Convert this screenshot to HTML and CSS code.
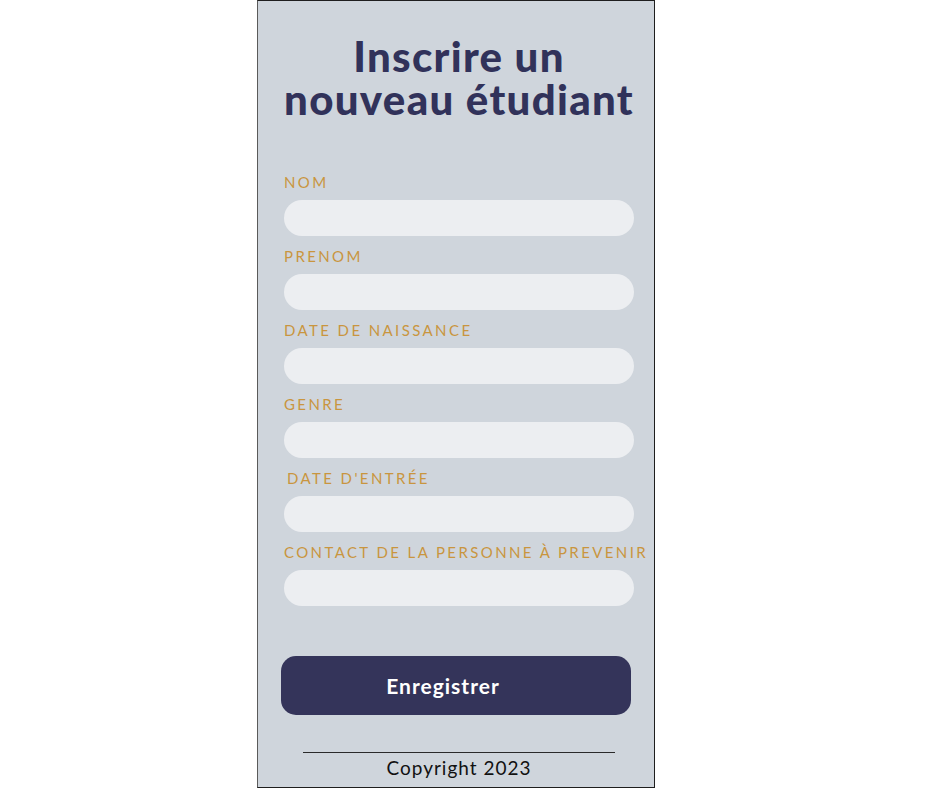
FILE: index.html
```html
<!DOCTYPE html>
<html lang="fr">
<head>
<meta charset="utf-8">
<title>Inscrire un nouveau étudiant</title>
<link rel="stylesheet" href="styles.css">
</head>
<body>
<main class="panel">
  <h1 class="title">Inscrire un<br>nouveau étudiant</h1>
  <form class="form">
    <div class="field">
      <label class="label" for="nom">NOM</label>
      <input class="input" id="nom" type="text">
    </div>
    <div class="field">
      <label class="label" for="prenom">PRENOM</label>
      <input class="input" id="prenom" type="text">
    </div>
    <div class="field">
      <label class="label" for="naissance">DATE DE NAISSANCE</label>
      <input class="input" id="naissance" type="text">
    </div>
    <div class="field">
      <label class="label" for="genre">GENRE</label>
      <input class="input" id="genre" type="text">
    </div>
    <div class="field">
      <label class="label label--indent" for="entree">DATE D'ENTRÉE</label>
      <input class="input" id="entree" type="text">
    </div>
    <div class="field">
      <label class="label" for="contact">CONTACT DE LA PERSONNE À PREVENIR</label>
      <input class="input" id="contact" type="text">
    </div>
    <button class="button" type="button">Enregistrer</button>
  </form>
  <footer class="footer">
    <hr class="rule">
    <p class="copyright">Copyright 2023</p>
  </footer>
</main>
</body>
</html>
```

FILE: styles.css
```css
* { box-sizing: border-box; }

html, body {
  margin: 0;
  padding: 0;
  background: #ffffff;
}

.panel {
  margin-left: 257px;
  width: 398px;
  height: 788px;
  background: #cfd5dc;
  border: 1px solid #1e1e1e;
  border-left-color: #5a5a5a;
  padding: 0 20px 0 26px;
  display: flex;
  flex-direction: column;
  overflow: hidden;
  font-family: Lato, "Noto Sans", sans-serif;
}

.title {
  margin: 34px 0 0;
  font-family: Lato, "Noto Sans", sans-serif;
  font-weight: 900;
  font-size: 42px;
  line-height: 43px;
  color: #31325a;
  text-align: center;
  letter-spacing: 1.3px;
  white-space: nowrap;
}

.form {
  margin-top: 51px;
  display: flex;
  flex-direction: column;
}

.field {
  display: flex;
  flex-direction: column;
  margin-bottom: 10px;
}

.label {
  font-size: 15px;
  line-height: 20px;
  letter-spacing: 2.4px;
  color: #c9953f;
  white-space: nowrap;
  margin-bottom: 8px;
}

.label--indent { padding-left: 3px; }

.input {
  width: 350px;
  height: 36px;
  border: none;
  border-radius: 18px;
  background: #eceef1;
  outline: none;
  padding: 0 16px;
}

.button {
  margin: 40px 0 0 -3px;
  width: 350px;
  height: 59px;
  border: none;
  border-radius: 15px;
  background: #34345a;
  color: #ffffff;
  font-family: Lato, "Noto Sans", sans-serif;
  font-weight: 700;
  font-size: 21px;
  letter-spacing: 1px;
  padding: 0 26px 0 0;
}

.footer {
  margin-top: 37px;
  display: flex;
  flex-direction: column;
  align-items: center;
}

.rule {
  width: 312px;
  margin: 0;
  border: none;
  border-top: 1px solid #2a2a2a;
}

.copyright {
  margin: 4px 0 0;
  font-size: 19px;
  line-height: 22px;
  color: #111111;
  letter-spacing: 1px;
}
```
